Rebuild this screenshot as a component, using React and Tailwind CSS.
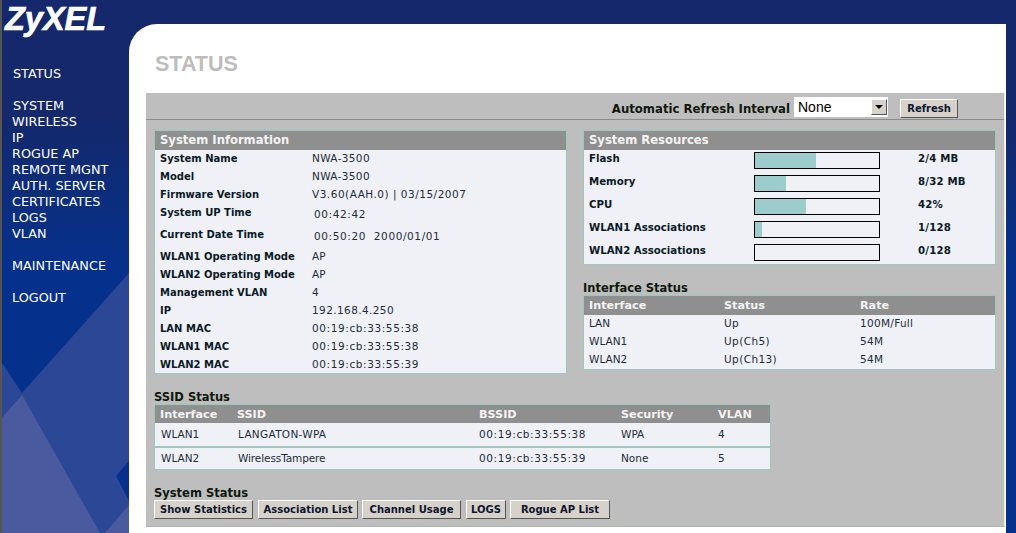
const NAV = [
  ["STATUS", "mt-[66px]"],
  ["SYSTEM", "mt-[16px]"],
  ["WIRELESS", "-ml-px"],
  ["IP", "-ml-px"],
  ["ROGUE AP", "-ml-px"],
  ["REMOTE MGNT", "-ml-px"],
  ["AUTH. SERVER", "-ml-px"],
  ["CERTIFICATES", "-ml-px"],
  ["LOGS", "-ml-px"],
  ["VLAN", "-ml-px"],
  ["MAINTENANCE", "-ml-px mt-[16px]"],
  ["LOGOUT", "-ml-px mt-[16px]"],
];

const SYSTEM_INFO = [
  ["System Name", "NWA-3500", "h-[18px]", "tracking-[0.35px]"],
  ["Model", "NWA-3500", "h-[18px]", "tracking-[0.35px]"],
  ["Firmware Version", "V3.60(AAH.0) | 03/15/2007", "h-[18px]", "tracking-[0.5px]"],
  ["System UP Time", "00:42:42", "h-[22px] pb-[4px]", "ml-[2px] mt-[4px] tracking-[0.6px]"],
  ["Current Date Time", "00:50:20\u00a0\u00a02000/01/01", "h-[22px] pb-[4px]", "ml-[2px] mt-[4px] tracking-[0.6px]"],
  ["WLAN1 Operating Mode", "AP", "h-[18px]"],
  ["WLAN2 Operating Mode", "AP", "h-[18px]"],
  ["Management VLAN", "4", "h-[18px]"],
  ["IP", "192.168.4.250", "h-[18px]", "tracking-[0.4px]"],
  ["LAN MAC", "00:19:cb:33:55:38", "h-[18px]", "tracking-[0.6px]"],
  ["WLAN1 MAC", "00:19:cb:33:55:38", "h-[18px]", "tracking-[0.6px]"],
  ["WLAN2 MAC", "00:19:cb:33:55:39", "h-[18px]", "tracking-[0.6px]"],
];

const RESOURCES = [
  ["Flash", 49, "2/4 MB"],
  ["Memory", 25, "8/32 MB"],
  ["CPU", 41, "42%"],
  ["WLAN1 Associations", 6, "1/128"],
  ["WLAN2 Associations", 0, "0/128"],
];

const INTERFACES = [
  ["LAN", "Up", "100M/Full"],
  ["WLAN1", "Up(Ch5)", "54M"],
  ["WLAN2", "Up(Ch13)", "54M"],
];

const BUTTONS = [
  ["Show Statistics", "w-[99px]"],
  ["Association List", "w-[100px] ml-[5px]"],
  ["Channel Usage", "w-[99px] ml-[4px]"],
  ["LOGS", "w-[40px] ml-[5px]"],
  ["Rogue AP List", "w-[100px] ml-[4px]"],
];

function Btn({ label, className = "" }) {
  return (
    <button className={`h-[19px] bg-[#d6d2ca] border border-t-white border-l-white border-r-[#555] border-b-[#555] text-[10px] font-bold text-[#0b1530] leading-none ${className}`}>
      {label}
    </button>
  );
}

function PanelHead({ children }) {
  return (
    <div className="h-[19px] bg-[#8f8f8f] pl-[5px] text-[11.6px] leading-[18px] font-bold text-[#f4f4f4]">
      {children}
    </div>
  );
}

function SectionTitle({ children, className = "" }) {
  return <div className={`text-[11.5px] font-bold leading-[13px] text-[#10180c] ${className}`}>{children}</div>;
}

function Sidebar() {
  return (
    <aside className="relative w-[129px] shrink-0 border-l-[2px] border-[#555] overflow-hidden">
      <svg className="absolute -left-[2px] top-0" width="129" height="533" viewBox="0 0 129 533">
        <polygon points="0,360 22,393 129,273 129,533 0,533" fill="#2c4796" />
        <polygon points="22,395 0,420 0,533 100,533" fill="#4a5a9f" />
        <polygon points="105,533 129,505 129,533" fill="#4a5a9f" />
        <polygon points="116,476 129,461 129,501" fill="#05318c" />
      </svg>
      <div className="relative">
        <div className="h-[0px] pl-[3px] text-[32.5px] leading-[38px] font-bold italic text-white font-['Liberation_Sans',sans-serif] [-webkit-text-stroke:0.7px_white]">ZyXEL</div>
        <nav className="flex flex-col pl-[11px] text-[12.8px] leading-[16px] text-white font-['DejaVu_Sans',sans-serif]">
          {NAV.map(([label, cls]) => (
            <a key={label} className={cls}>{label}</a>
          ))}
        </nav>
      </div>
    </aside>
  );
}

export default function App() {
  return (
    <div className="flex w-[1016px] h-[533px] overflow-hidden bg-[linear-gradient(180deg,#14286b_0%,#14286b_22%,#05318c_50%,#05318c_100%)] font-['DejaVu_Sans',sans-serif]">
      <Sidebar />

      <main className="mt-[24px] w-[877px] shrink-0 bg-white rounded-tl-[28px] pl-[17px] pr-[1px] overflow-hidden">
        <h1 className="h-[69px] pl-[9px] pt-[27px] text-[21.5px] leading-[26px] font-bold text-[#bdbdbd] font-['Liberation_Sans',sans-serif]">
          STATUS
        </h1>

        <div className="h-[434px] bg-[#bebebe] border-r border-b border-r-[#eeeeee] border-b-[#a8b5ab]">
          <div className="flex items-start justify-end h-[27px] pt-[3px] border-b border-[#8c8c8c] pr-[46px]">
            <span className="text-[11.7px] leading-[14px] font-bold text-[#10180c] mt-[6px]">Automatic Refresh Interval</span>
            <div className="flex items-center justify-between w-[94px] h-[20px] ml-[4px] mt-[1px] bg-white pl-[4px] pr-[1px] text-[14px] text-black font-['Liberation_Sans',sans-serif]">
              None
              <span className="flex items-center justify-center w-[16px] h-[16px] bg-[#d6d2ca] border border-t-white border-l-white border-r-[#555] border-b-[#555]">
                <span className="border-x-[4px] border-t-[4px] border-x-transparent border-t-black" />
              </span>
            </div>
            <Btn label="Refresh" className="w-[58px] ml-[12px] mt-[3px]" />
          </div>

          <div className="flex gap-[16px] pl-[8px] pt-[10px]">
            <section className="w-[413px] h-[244px] bg-[#eff1f6] border border-[#9cc8bd]">
              <PanelHead>System Information</PanelHead>
              {SYSTEM_INFO.map(([label, value, rowCls, valueCls = ""]) => (
                <div key={label} className={`flex items-center pl-[5px] text-[10.5px] text-[#1e2c3a] ${rowCls}`}>
                  <span className="w-[152px] shrink-0 mb-[2px] text-[10px] font-bold text-[#0b1a26]">{label}</span>
                  <span className={valueCls}>{value}</span>
                </div>
              ))}
            </section>

            <div className="w-[413px]">
              <section className="h-[135px] bg-[#eff1f6] border border-[#9cc8bd]">
                <PanelHead>System Resources</PanelHead>
                <div className="flex flex-col gap-[6px] pt-[2px]">
                  {RESOURCES.map(([label, pct, value]) => (
                    <div key={label} className="flex items-start h-[17px] pl-[5px] text-[10.2px] leading-[14px] font-bold text-[#0b1a26]">
                      <span className="w-[165px] shrink-0">{label}</span>
                      <div className="w-[126px] h-[17px] shrink-0 border border-black">
                        <div className="h-full bg-[#9ccccc]" style={{ width: `${pct}%` }} />
                      </div>
                      <span className="ml-[38px] tracking-[0.2px]">{value}</span>
                    </div>
                  ))}
                </div>
              </section>

              <SectionTitle className="mt-[17px]">Interface Status</SectionTitle>
              <section className="h-[75px] bg-[#eff1f6] border border-[#9cc8bd]">
                <div className="grid grid-cols-[135px_136px_1fr] h-[19px] bg-[#8f8f8f] pl-[5px] text-[11.2px] leading-[20px] font-bold text-[#f4f4f4]">
                  <span>Interface</span>
                  <span>Status</span>
                  <span>Rate</span>
                </div>
                {INTERFACES.map(([name, status, rate]) => (
                  <div key={name} className="grid grid-cols-[135px_136px_1fr] items-center h-[18px] pl-[5px] text-[10.5px] text-[#1e2c3a]">
                    <span>{name}</span>
                    <span className="tracking-[0.4px]">{status}</span>
                    <span className="tracking-[0.3px]">{rate}</span>
                  </div>
                ))}
              </section>
            </div>
          </div>

          <div className="pl-[8px]">
            <SectionTitle className="mt-[17px]">SSID Status</SectionTitle>
            <section className="w-[617px] h-[66px] bg-[#eff1f6] border border-[#9cc8bd]">
              <div className="grid grid-cols-[77px_242px_142px_97px_1fr] h-[18px] bg-[#8f8f8f] pl-[5px] text-[11.2px] leading-[19px] font-bold text-[#f4f4f4]">
                <span>Interface</span>
                <span>SSID</span>
                <span>BSSID</span>
                <span>Security</span>
                <span>VLAN</span>
              </div>
              <div className="grid grid-cols-[77px_241px_142px_97px_1fr] items-center h-[23px] pl-[6px] text-[10.5px] text-[#1e2c3a]">
                <span>WLAN1</span>
                <span className="tracking-[0.3px]">LANGATON-WPA</span>
                <span className="tracking-[0.6px]">00:19:cb:33:55:38</span>
                <span>WPA</span>
                <span>4</span>
              </div>
              <div className="h-[2px] bg-[#9cc8bd]" />
              <div className="grid grid-cols-[77px_241px_142px_97px_1fr] items-center h-[21px] pl-[6px] text-[10.5px] text-[#1e2c3a]">
                <span>WLAN2</span>
                <span className="tracking-[-0.1px]">WirelessTampere</span>
                <span className="tracking-[0.6px]">00:19:cb:33:55:39</span>
                <span>None</span>
                <span>5</span>
              </div>
            </section>

            <SectionTitle className="mt-[17px]">System Status</SectionTitle>
            <div className="flex">
              {BUTTONS.map(([label, width]) => (
                <Btn key={label} label={label} className={width} />
              ))}
            </div>
          </div>
        </div>
      </main>
    </div>
  );
}
